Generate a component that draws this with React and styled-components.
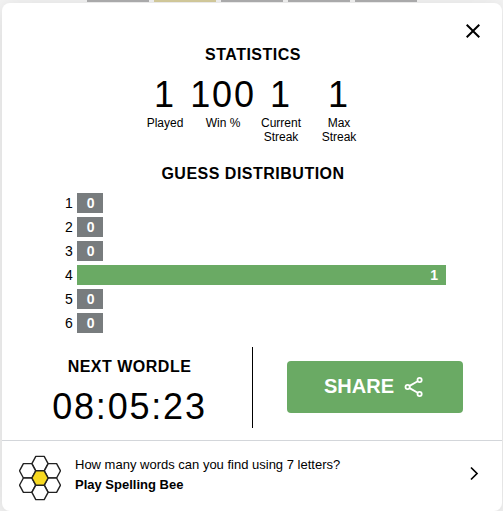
import React from 'react'
import styled, { createGlobalStyle } from 'styled-components'

const GlobalStyle = createGlobalStyle`
  * {
    box-sizing: border-box;
  }

  body {
    margin: 0;
    overflow: hidden;
    background: #f4f4f4;
    color: #000;
    font-family: "Liberation Sans", Arial, sans-serif;
  }
`

const Page = styled.div`
  display: flex;
  flex-direction: column;
  gap: 1px;
  height: 100vh;
  overflow: hidden;
`

const Board = styled.div`
  display: grid;
  grid-template-columns: repeat(5, 62px);
  justify-content: center;
  gap: 5px;
  height: 2px;
  flex-shrink: 0;
`

const Tile = styled.div`
  background: ${props => (props.$present ? '#d8cf9f' : '#b0b0b1')};
`

const Modal = styled.main`
  margin: 0 1px 0 2px;
  background: #fff;
  border-radius: 8px;
  box-shadow: 0 4px 23px rgba(0, 0, 0, 0.12);
`

const Header = styled.header`
  display: flex;
  justify-content: flex-end;
  padding: 16px 17px 3px;
`

const CloseButton = styled.button`
  display: flex;
  padding: 0;
  border: 0;
  background: none;
  cursor: pointer;
`

const Content = styled.div`
  display: flex;
  flex-direction: column;
  align-items: center;
  padding: 0 15px 12px 17px;
`

const Heading = styled.h1`
  margin: 0;
  font-size: 16px;
  line-height: 18px;
  letter-spacing: 0.5px;
  text-align: center;
  text-transform: uppercase;
`

const StatList = styled.div`
  display: flex;
  margin: 10px 2px 21px 0;
`

const Stat = styled.div`
  width: 50px;
  margin: 0 4px;
`

const BigNumber = styled.div`
  display: flex;
  justify-content: center;
  font-size: 36px;
  line-height: 42px;
  letter-spacing: 0.05em;
`

const StatLabel = styled.div`
  font-size: 12px;
  line-height: 14px;
  text-align: center;
`

const Distribution = styled.div`
  width: 100%;
  padding: 10px 41px 10px 46px;
`

const GuessRow = styled.div`
  display: flex;
  align-items: center;
  height: 20px;
  margin-bottom: 4px;
  font-size: 14px;
  line-height: 20px;
`

const Graph = styled.div`
  flex: 1;
  padding-left: 4px;
`

const Bar = styled.div`
  width: ${props => (props.$winner ? '100%' : '7%')};
  height: 20px;
  padding-right: 8px;
  background: ${props => (props.$winner ? '#6aaa64' : '#787c7e')};
  color: #fff;
  font-weight: bold;
  text-align: right;
`

const Footer = styled.section`
  display: flex;
  width: 100%;
`

const Countdown = styled.div`
  width: 50%;
  padding: 11px 12px 0 0;
  border-right: 1px solid #000;
`

const Timer = styled.div`
  display: flex;
  justify-content: center;
  margin-top: 10px;
  font-size: 36px;
  line-height: 42px;
  letter-spacing: 0.05em;
`

const Share = styled.div`
  display: flex;
  width: 50%;
  align-items: center;
  justify-content: center;
  padding: 0 0 2px 10px;
`

const ShareButton = styled.button`
  display: flex;
  align-items: center;
  justify-content: center;
  gap: 8px;
  width: 79%;
  height: 52px;
  padding: 0;
  border: 0;
  border-radius: 4px;
  background: #6aaa64;
  color: #fff;
  font: bold 20px "Liberation Sans", Arial, sans-serif;
  text-transform: uppercase;
  cursor: pointer;
`

const Promo = styled.a`
  display: flex;
  align-items: flex-start;
  padding: 14px 23px 10px 17px;
  border-top: 1px solid #d3d6da;
  color: #000;
  text-decoration: none;
`

const PromoText = styled.div`
  flex: 1;
  margin-left: 14px;
  font-size: 13px;
  line-height: 20px;
`

const CloseIcon = () => (
  <svg width="24" height="24" viewBox="0 0 24 24" aria-hidden="true">
    <path d="M19 6.41L17.59 5 12 10.59 6.41 5 5 6.41 10.59 12 5 17.59 6.41 19 12 13.41 17.59 19 19 17.59 13.41 12z" />
  </svg>
)

const ShareIcon = () => (
  <svg width="24" height="24" viewBox="0 0 24 24" fill="none" stroke="#fff" strokeWidth="1.8" aria-hidden="true">
    <path d="M7.6 10.9L15.7 6.2M7.6 13.1L15.7 17.8" />
    <circle cx="5.6" cy="12" r="2.1" />
    <circle cx="17.6" cy="5" r="2.1" />
    <circle cx="17.6" cy="19" r="2.1" />
  </svg>
)

// the yellow centre cell comes last so its outline stays on top
const cells = [[21, 8.6], [8.6, 15.8], [33.4, 15.8], [8.6, 30.2], [33.4, 30.2], [21, 37.4], [21, 23]]

const BeeIcon = () => (
  <svg width="42" height="46" viewBox="0 0 42 46" stroke="#222" strokeWidth="1.4" strokeLinejoin="round" aria-hidden="true">
    {cells.map(([x, y], i) => (
      <path
        key={i}
        d={`M${x - 8.1} ${y}l3.9 -7.2h8.4l3.9 7.2l-3.9 7.2h-8.4z`}
        fill={i === 6 ? '#f8da22' : '#fff'}
      />
    ))}
  </svg>
)

const Chevron = () => (
  <svg width="10" height="36" viewBox="0 0 10 36" fill="none" stroke="#000" strokeWidth="1.7" aria-hidden="true">
    <path d="M2 12.5l6 6-6 6" />
  </svg>
)

const stats = [
  { value: '1', label: 'Played' },
  { value: '100', label: 'Win %' },
  { value: '1', label: 'Current Streak' },
  { value: '1', label: 'Max Streak' }
]

const guesses = [0, 0, 0, 1, 0, 0]

const App = () => (
  <Page>
    <GlobalStyle />
    <Board>
      {[0, 1, 2, 3, 4].map(i => <Tile key={i} $present={i === 1} />)}
    </Board>
    <Modal>
      <Header>
        <CloseButton aria-label="Close"><CloseIcon /></CloseButton>
      </Header>
      <Content>
        <Heading>Statistics</Heading>
        <StatList>
          {stats.map(({ value, label }) => (
            <Stat key={label}>
              <BigNumber>{value}</BigNumber>
              <StatLabel>{label}</StatLabel>
            </Stat>
          ))}
        </StatList>
        <Heading as="h2">Guess Distribution</Heading>
        <Distribution>
          {guesses.map((count, i) => (
            <GuessRow key={i}>
              {i + 1}
              <Graph><Bar $winner={count > 0}>{count}</Bar></Graph>
            </GuessRow>
          ))}
        </Distribution>
        <Footer>
          <Countdown>
            <Heading as="h2">Next Wordle</Heading>
            <Timer>08:05:23</Timer>
          </Countdown>
          <Share>
            <ShareButton>Share<ShareIcon /></ShareButton>
          </Share>
        </Footer>
      </Content>
      <Promo href="#spelling-bee">
        <BeeIcon />
        <PromoText>
          How many words can you find using 7 letters?<br />
          <b>Play Spelling Bee</b>
        </PromoText>
        <Chevron />
      </Promo>
    </Modal>
  </Page>
)

export default App
